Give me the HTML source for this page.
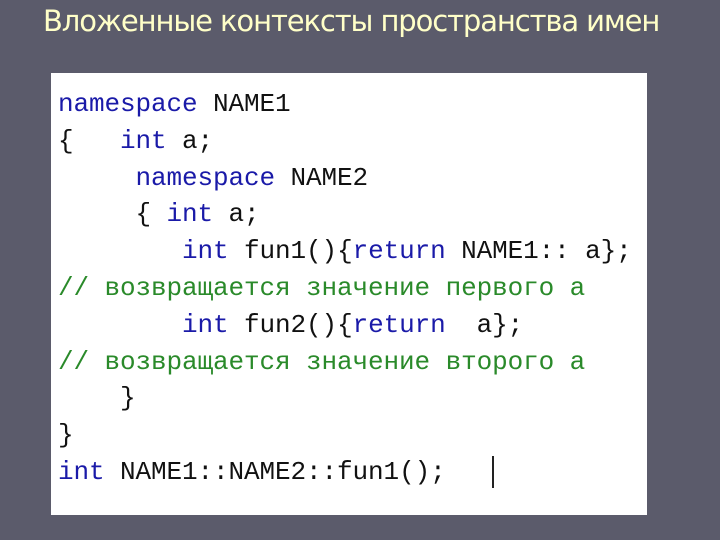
<!DOCTYPE html>
<html><head><meta charset="utf-8"><style>
body{margin:0;width:720px;height:540px;background:#5b5b6b;position:relative;overflow:hidden}
.t{position:absolute;left:43px;top:4px;font:29px "DejaVu Sans","Liberation Sans",sans-serif;color:#ffffc8;letter-spacing:-1.1px;white-space:nowrap}
.box{position:absolute;left:51px;top:73px;width:596px;height:442px;background:#fff}
pre{position:absolute;left:58px;top:86px;margin:0;font:26px/36.8px "Liberation Mono",monospace;color:#111;letter-spacing:-0.1px}
.k{color:#1a1aa8}.c{color:#2a8a2a}
.cur{position:absolute;left:492px;top:456px;width:2px;height:32px;background:#222}
</style></head><body>
<div class="t">Вложенные контексты пространства имен</div>
<div class="box"></div>
<pre><span class="k">namespace</span> NAME1
{   <span class="k">int</span> a;
     <span class="k">namespace</span> NAME2
     { <span class="k">int</span> a;
        <span class="k">int</span> fun1(){<span class="k">return</span> NAME1:: a};
<span class="c">// возвращается значение первого а</span>
        <span class="k">int</span> fun2(){<span class="k">return</span>  a};
<span class="c">// возвращается значение второго а</span>
    }
}
<span class="k">int</span> NAME1::NAME2::fun1();</pre>
<div class="cur"></div>
</body></html>
